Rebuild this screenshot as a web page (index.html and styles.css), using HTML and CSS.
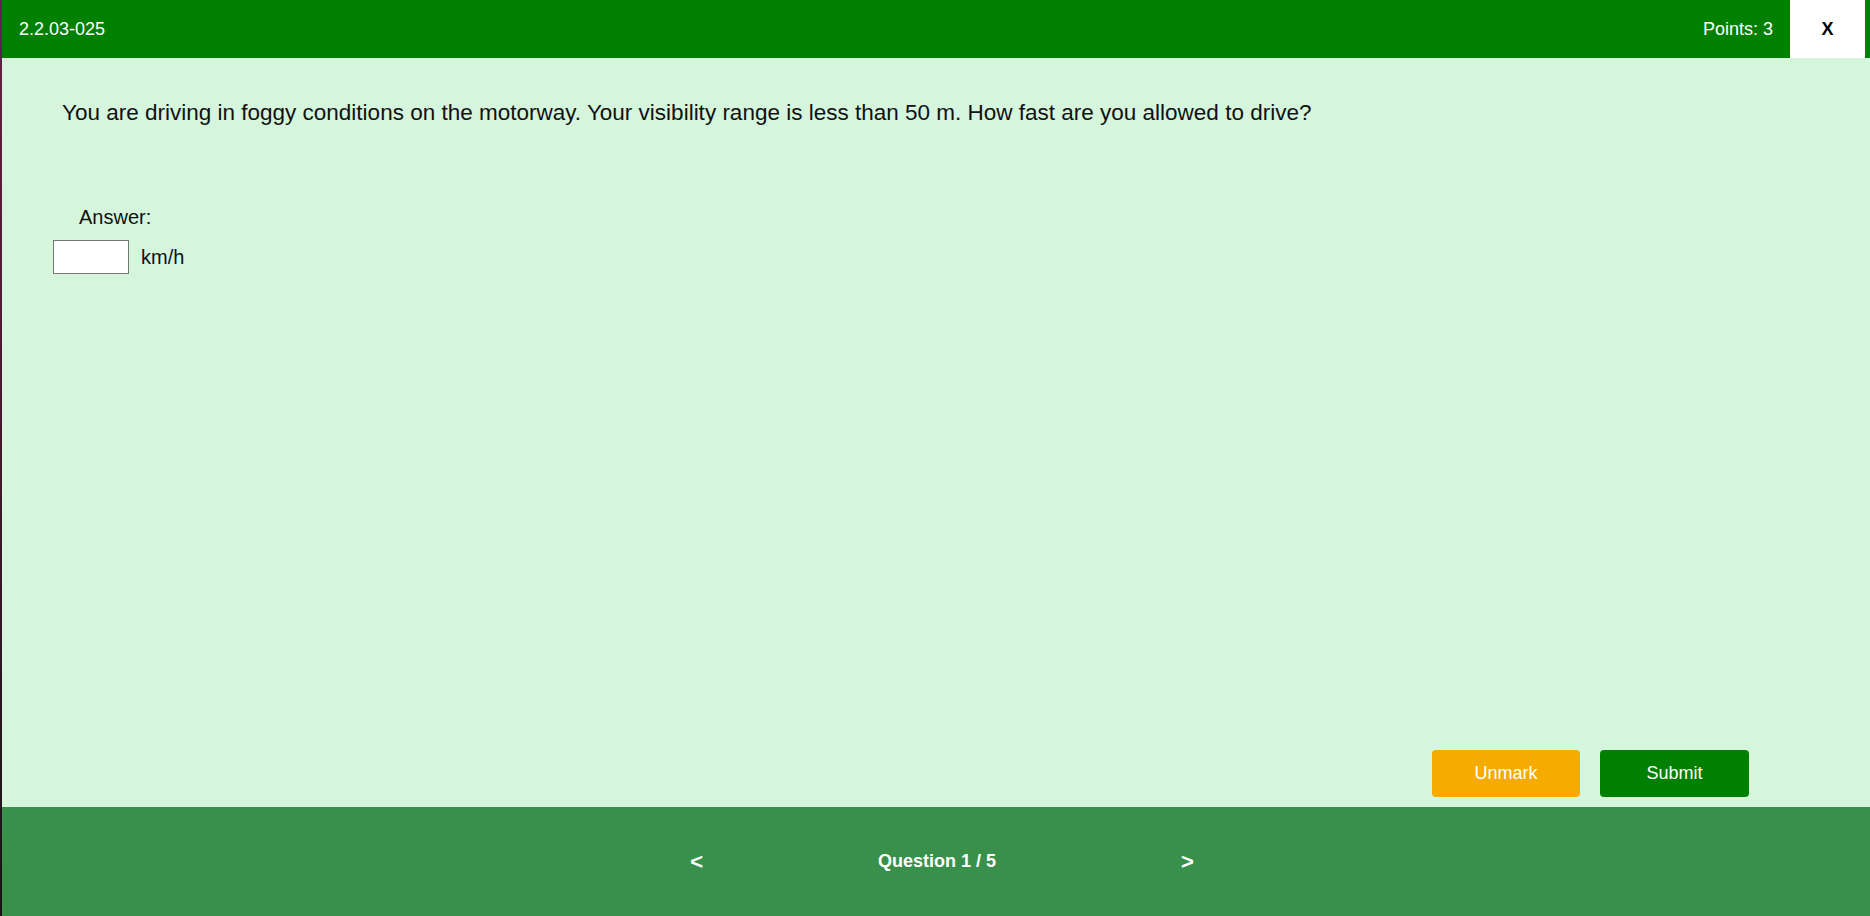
FILE: index.html
```html
<!DOCTYPE html>
<html lang="en">
<head>
<meta charset="utf-8">
<title>Question 1 / 5</title>
<link rel="stylesheet" href="styles.css">
</head>
<body>
<div class="app">
  <header class="topbar">
    <div class="qid">2.2.03-025</div>
    <div class="topbar-right">
      <span class="points">Points: 3</span>
      <button class="close-btn" type="button">X</button>
    </div>
  </header>
  <main class="content">
    <p class="question">You are driving in foggy conditions on the motorway. Your visibility range is less than 50 m. How fast are you allowed to drive?</p>
    <div class="answer">
      <div class="answer-label">Answer:</div>
      <div class="answer-row">
        <input class="answer-input" type="text" aria-label="Answer">
        <span class="unit">km/h</span>
      </div>
    </div>
    <div class="actions">
      <button class="btn btn-unmark" type="button">Unmark</button>
      <button class="btn btn-submit" type="button">Submit</button>
    </div>
  </main>
  <footer class="pager">
    <span class="nav nav-prev">&lt;</span>
    <span class="counter">Question 1 / 5</span>
    <span class="nav nav-next">&gt;</span>
  </footer>
</div>
</body>
</html>
```
FILE: styles.css
```css
html, body {
  margin: 0;
  height: 100%;
}
body {
  background: linear-gradient(#6a1f45, #151515);
  font-family: "Liberation Sans", Arial, sans-serif;
  overflow: hidden;
}
.app {
  margin-left: 2px;
  height: 100%;
  display: flex;
  flex-direction: column;
}
.topbar {
  height: 58px;
  flex: none;
  background: #008000;
  color: #ffffff;
  display: flex;
  align-items: stretch;
  justify-content: space-between;
  padding-left: 17px;
  padding-right: 5px;
  font-size: 18px;
}
.qid {
  display: flex;
  align-items: center;
}
.topbar-right {
  display: flex;
  align-items: stretch;
}
.points {
  display: flex;
  align-items: center;
  margin-right: 17px;
}
.close-btn {
  width: 75px;
  border: none;
  background: #ffffff;
  color: #000000;
  font-family: "Liberation Sans", Arial, sans-serif;
  font-size: 18px;
  font-weight: bold;
  padding: 0;
}
.content {
  flex: 1;
  background: #d5f5dc;
  display: flex;
  flex-direction: column;
  padding: 42px 121px 10px 0;
}
.question {
  margin: 0 0 0 60px;
  font-size: 22.5px;
  color: #111111;
}
.answer {
  margin-top: 80px;
  margin-left: 51px;
  font-size: 20px;
  color: #111111;
}
.answer-label {
  margin-left: 26px;
}
.answer-row {
  display: flex;
  align-items: center;
  margin-top: 11px;
}
.answer-input {
  width: 76px;
  height: 34px;
  box-sizing: border-box;
  border: 1px solid #767676;
  background: #ffffff;
  margin: 0;
  padding: 0 4px;
}
.unit {
  margin-left: 12px;
}
.actions {
  margin-top: auto;
  display: flex;
  justify-content: flex-end;
  gap: 20px;
}
.btn {
  width: 148px;
  height: 47px;
  border: none;
  border-radius: 4px;
  color: #ffffff;
  font-family: "Liberation Sans", Arial, sans-serif;
  font-size: 18px;
}
.btn-unmark {
  background: #f5ab00;
}
.btn-submit {
  width: 149px;
  background: #008000;
}
.pager {
  height: 109px;
  flex: none;
  background: #38904a;
  color: #ffffff;
  display: flex;
  align-items: center;
  justify-content: center;
  padding-left: 12px;
  font-weight: bold;
}
.counter {
  font-size: 18px;
}
.nav {
  font-size: 22px;
}
.nav-prev {
  margin-right: 175px;
}
.nav-next {
  margin-left: 185px;
}
```
